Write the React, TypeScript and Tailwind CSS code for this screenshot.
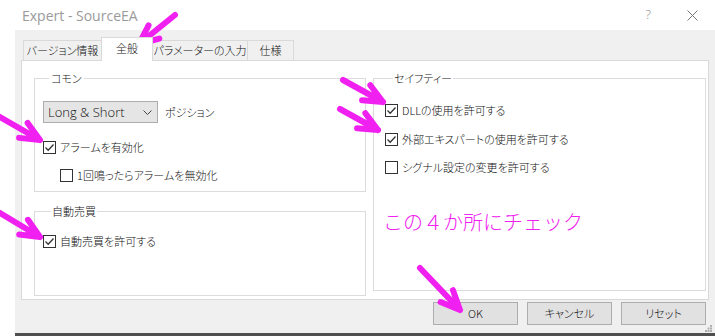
import React from "react";

const font =
  "font-['Noto_Sans_CJK_JP','Noto_Sans',sans-serif] font-light [font-feature-settings:'palt']";

type Arrow = { from: [number, number]; to: [number, number] };

const arrows: Arrow[] = [
  { from: [175, 15], to: [139, 44] },
  { from: [0, 117], to: [40, 140] },
  { from: [0, 213], to: [40, 237] },
  { from: [343, 80], to: [383, 102] },
  { from: [340, 109], to: [378, 130] },
  { from: [420, 268], to: [460, 310] },
];

function arrowPath({ from, to }: Arrow) {
  const ang = Math.atan2(from[1] - to[1], from[0] - to[0]);
  const b = 21;
  const spread = 0.42;
  const b1 = [to[0] + b * Math.cos(ang + spread), to[1] + b * Math.sin(ang + spread)];
  const b2 = [to[0] + b * Math.cos(ang - spread), to[1] + b * Math.sin(ang - spread)];
  return `M${from[0]},${from[1]} L${to[0]},${to[1]} M${b1[0]},${b1[1]} L${to[0]},${to[1]} L${b2[0]},${b2[1]}`;
}

function Check({ checked, label }: { checked?: boolean; label: string }) {
  return (
    <div className="flex h-[13px] items-center">
      <span className="flex h-[13px] w-[13px] shrink-0 items-center justify-center border border-[#333] bg-white">
        {checked && (
          <svg width="11" height="11" viewBox="0 0 11 11">
            <path d="M1.5 5.5 L4.2 8.2 L9.5 2.5" fill="none" stroke="#333" strokeWidth="1.3" />
          </svg>
        )}
      </span>
      <span className="ml-[4px] whitespace-nowrap leading-none">{label}</span>
    </div>
  );
}

function Tab({ label, w, active }: { label: string; w: string; active?: boolean }) {
  return (
    <div
      className={`${w} -ml-px flex items-center justify-center whitespace-nowrap border border-b-0 border-[#d9d9d9] ${
        active ? "relative z-10 -mb-px h-[24px] bg-white pb-[3px]" : "h-[20px] bg-[#f0f0f0]"
      }`}
    >
      {label}
    </div>
  );
}

function Button({ label }: { label: string }) {
  return (
    <button
      type="button"
      className="flex h-[23px] w-[85px] items-center justify-center border border-[#adadad] bg-[#e1e1e1] text-[11px]"
    >
      {label}
    </button>
  );
}

export default function App() {
  return (
    <div className={`relative h-[336px] w-[715px] overflow-hidden bg-white text-[11px] text-[#111] ${font}`}>
      <div className="flex h-[30px] items-center pl-[22px] pr-[17px]">
        <span className="font-['Open_Sans',sans-serif] text-[14px] font-normal text-[#9a9a9a]">Expert - SourceEA</span>
        <span className="ml-auto font-['Open_Sans',sans-serif] text-[13px] text-[#888]">?</span>
        <svg className="ml-[36px]" width="11" height="11" viewBox="0 0 11 11">
          <path d="M0.5 0.5 L10.5 10.5 M10.5 0.5 L0.5 10.5" stroke="#777" strokeWidth="1" />
        </svg>
      </div>

      <div className="ml-[15px] flex h-[303px] flex-col bg-[#f0f0f0]">
        <div className="flex h-[30px] items-end pl-[9px]">
          <Tab label="バージョン情報" w="w-[79px]" />
          <Tab label="全般" w="w-[52px]" active />
          <Tab label="パラメーターの入力" w="w-[96px]" />
          <Tab label="仕様" w="w-[47px]" />
        </div>

        <div className="ml-[6px] flex h-[240px] w-[688px] gap-[7px] border border-[#d9d9d9] bg-white pl-[12px] pt-[9px]">
          <div className="flex w-[332px] flex-col">
            <fieldset className="h-[122px] border border-[#dcdcdc] pl-[8px]">
              <legend className="ml-[6px] px-[2px] leading-[16px]">コモン</legend>
              <div className="mt-[15px] flex items-center">
                <div className="flex h-[22px] w-[115px] items-center border border-[#adadad] bg-[#e5e5e5] pl-[4px] pr-[5px]">
                  <span className="font-['Open_Sans',sans-serif] text-[13px] leading-none">Long &amp; Short</span>
                  <svg className="ml-auto" width="9" height="5" viewBox="0 0 9 5">
                    <path d="M0.5 0.5 L4.5 4.5 L8.5 0.5" fill="none" stroke="#444" strokeWidth="1" />
                  </svg>
                </div>
                <span className="ml-[7px]">ポジション</span>
              </div>
              <div className="mt-[18px]">
                <Check checked label="アラームを有効化" />
              </div>
              <div className="mt-[15px] pl-[17px]">
                <Check label="1回鳴ったらアラームを無効化" />
              </div>
            </fieldset>

            <fieldset className="mt-[11px] h-[93px] border border-[#dcdcdc] pl-[8px]">
              <legend className="ml-[8px] px-[1px] leading-[16px]">自動売買</legend>
              <div className="mt-[16px]">
                <Check checked label="自動売買を許可する" />
              </div>
            </fieldset>
          </div>

          <fieldset className="h-[221px] w-[333px] border border-[#dcdcdc] pl-[11px]">
            <legend className="ml-[8px] px-[1px] leading-[16px]">セイフティー</legend>
            <div className="mt-[18px]">
              <Check checked label="DLLの使用を許可する" />
            </div>
            <div className="mt-[16px]">
              <Check checked label="外部エキスパートの使用を許可する" />
            </div>
            <div className="mt-[15px]">
              <Check label="シグナル設定の変更を許可する" />
            </div>
            <p className="mt-[36px] -ml-[2px] text-[20px] leading-[24px] text-[#f020f0] [font-feature-settings:normal]">
              この４か所にチェック
            </p>
          </fieldset>
        </div>

        <div className="flex justify-end gap-[9px] pr-[9px] pt-[2px]">
          <Button label="OK" />
          <Button label="キャンセル" />
          <Button label="リセット" />
        </div>
      </div>
      <div className="ml-[15px] h-[3px] bg-[#505050]" />

      <svg className="absolute bottom-[4px] right-[3px]" width="7" height="7" viewBox="0 0 7 7">
        <g fill="#b0b0b0">
          <rect x="5" y="0" width="2" height="2" />
          <rect x="2.5" y="2.5" width="2" height="2" />
          <rect x="5" y="2.5" width="2" height="2" />
          <rect x="0" y="5" width="2" height="2" />
          <rect x="2.5" y="5" width="2" height="2" />
          <rect x="5" y="5" width="2" height="2" />
        </g>
      </svg>

      <svg className="pointer-events-none absolute left-0 top-0" width="715" height="336">
        {arrows.map((a, i) => (
          <path
            key={i}
            d={arrowPath(a)}
            fill="none"
            stroke="#f020f0"
            strokeWidth="6"
            strokeLinecap="round"
            strokeLinejoin="round"
          />
        ))}
      </svg>
    </div>
  );
}
